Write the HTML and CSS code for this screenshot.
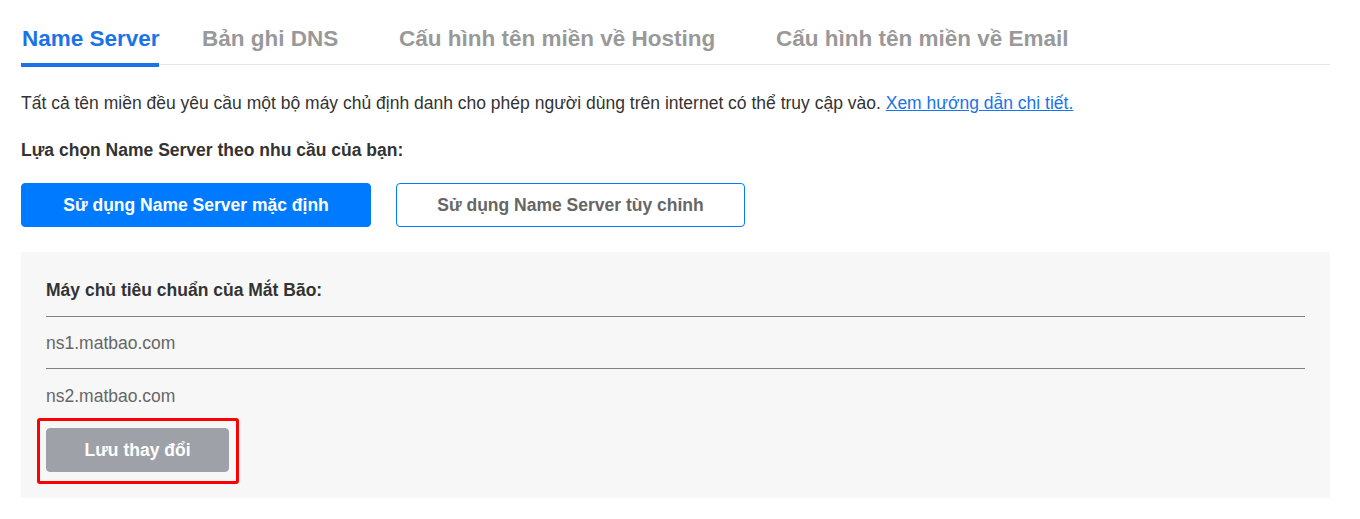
FILE: index.html
```html
<!DOCTYPE html>
<html lang="vi">
<head>
<meta charset="utf-8">
<title>Name Server</title>
<link rel="stylesheet" href="styles.css">
</head>
<body>
<div class="page">
  <nav class="tabs">
    <a class="tab tab-active t1">Name Server</a>
    <a class="tab t2">Bản ghi DNS</a>
    <a class="tab t3">Cấu hình tên miền về Hosting</a>
    <a class="tab t4">Cấu hình tên miền về Email</a>
  </nav>
  <p class="intro">Tất cả tên miền đều yêu cầu một bộ máy chủ định danh cho phép người dùng trên internet có thể truy cập vào. <a class="link" href="#">Xem hướng dẫn chi tiết.</a></p>
  <p class="label">Lựa chọn Name Server theo nhu cầu của bạn:</p>
  <div class="choices">
    <button class="btn btn-primary">Sử dụng Name Server mặc định</button>
    <button class="btn btn-outline">Sử dụng Name Server tùy chỉnh</button>
  </div>
  <section class="panel">
    <div class="panel-title">Máy chủ tiêu chuẩn của Mắt Bão:</div>
    <div class="ns-row">ns1.matbao.com</div>
    <div class="ns-row">ns2.matbao.com</div>
    <span class="highlight"><button class="btn btn-save">Lưu thay đổi</button></span>
  </section>
</div>
</body>
</html>
```

FILE: styles.css
```css
* { box-sizing: border-box; }
html, body { margin: 0; padding: 0; background: #fff; }
body {
  font-family: "Liberation Sans", Arial, sans-serif;
  color: #333;
  font-size: 17.5px;
}
.page {
  width: 1309px;
  margin-left: 21px;
  padding-top: 24px;
}
.tabs {
  display: flex;
  border-bottom: 1px solid #e6e6e6;
  height: 41px;
}
.tab {
  font-size: 22.5px;
  font-weight: bold;
  line-height: 30px;
  color: #999;
  padding: 0 0 9px 1px;
  height: 43px;
  border-bottom: 4px solid transparent;
  white-space: nowrap;
  cursor: pointer;
}
.tab-active {
  color: #1a73e8;
  border-bottom-color: #1a73e8;
}
.t1 { width: 138px; margin-right: 42px; }
.t2 { width: 197px; }
.t3 { width: 377px; }
.intro {
  margin: 26px 0 0 0;
  line-height: 24px;
}
.link { color: #1a73e8; text-decoration: underline; }
.label {
  margin: 23px 0 0 0;
  font-weight: bold;
  line-height: 24px;
}
.choices {
  display: flex;
  gap: 25px;
  margin-top: 21px;
}
.btn {
  font-family: "Liberation Sans", Arial, sans-serif;
  font-size: 17.5px;
  font-weight: bold;
  height: 44px;
  border-radius: 4px;
  border: 1px solid transparent;
  cursor: pointer;
  padding: 0;
}
.btn-primary {
  width: 350px;
  background: #007bff;
  border-color: #007bff;
  color: #fff;
}
.btn-outline {
  width: 349px;
  background: #fff;
  border-color: #007bff;
  color: #666;
}
.panel {
  margin-top: 25px;
  background: #f7f7f7;
  padding: 26px 25px 26px 25px;
  height: 246px;
}
.panel-title {
  font-weight: bold;
  line-height: 24px;
  padding-bottom: 14px;
  border-bottom: 1px solid #808080;
}
.ns-row {
  color: #666;
  line-height: 24px;
  padding: 14px 0 13px;
}
.ns-row + .ns-row { border-top: 1px solid #808080; padding-top: 15px; padding-bottom: 0; }
.highlight {
  position: relative;
  display: inline-block;
  margin-top: 20px;
  vertical-align: top;
}
.highlight::after {
  content: "";
  position: absolute;
  left: -9px;
  right: -10px;
  top: -10px;
  bottom: -12px;
  border: 3px solid #ff0000;
  border-radius: 3px;
}
.btn-save {
  display: block;
  width: 183px;
  background: #9ea2a8;
  border-color: #9ea2a8;
  color: #fff;
}
```
